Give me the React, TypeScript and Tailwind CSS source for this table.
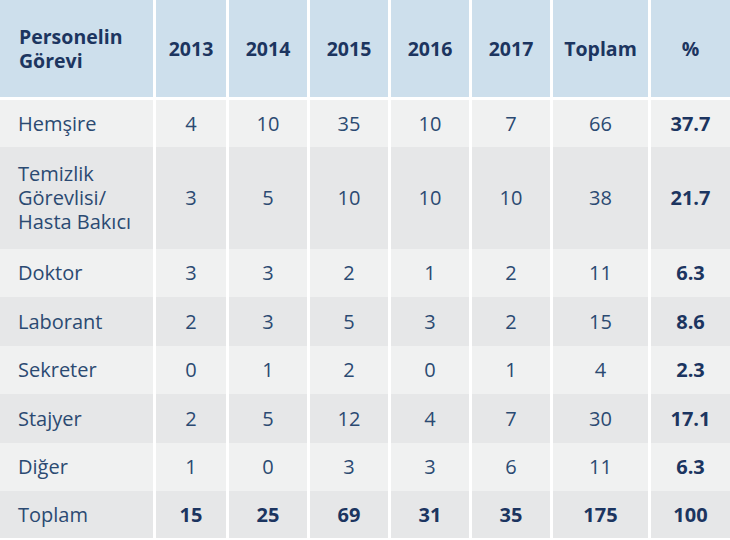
const rows: { name: string; vals: string[]; pct: string; h: string; dark?: boolean; bold?: boolean }[] = [
  { name: "Hemşire", vals: ["4", "10", "35", "10", "7", "66"], pct: "37.7", h: "h-[47px]" },
  { name: "Temizlik Görevlisi/ Hasta Bakıcı", vals: ["3", "5", "10", "10", "10", "38"], pct: "21.7", h: "h-[102px]", dark: true },
  { name: "Doktor", vals: ["3", "3", "2", "1", "2", "11"], pct: "6.3", h: "h-[48px]" },
  { name: "Laborant", vals: ["2", "3", "5", "3", "2", "15"], pct: "8.6", h: "h-[49px]", dark: true },
  { name: "Sekreter", vals: ["0", "1", "2", "0", "1", "4"], pct: "2.3", h: "h-[48px]" },
  { name: "Stajyer", vals: ["2", "5", "12", "4", "7", "30"], pct: "17.1", h: "h-[49px]", dark: true },
  { name: "Diğer", vals: ["1", "0", "3", "3", "6", "11"], pct: "6.3", h: "h-[48px]" },
  { name: "Toplam", vals: ["15", "25", "69", "31", "35", "175"], pct: "100", h: "h-[47px]", dark: true, bold: true },
];

const cols = "grid grid-cols-[153px_70px_78px_78px_78px_78px_95px_79px] gap-x-[3px]";
const headers = ["2013", "2014", "2015", "2016", "2017", "Toplam", "%"];

export default function App() {
  return (
    <div className="w-[730px] h-[540px] bg-white text-[20px] font-['Open_Sans',sans-serif]">
      <div className={`${cols} h-[97px] mb-[3px] text-[19.5px]`}>
        <div className="bg-[#cddfec] flex items-center pl-[19px] font-bold leading-[24px] text-[#1c3560]">
          Personelin
          <br />
          Görevi
        </div>
        {headers.map((h) => (
          <div key={h} className="bg-[#cddfec] flex items-center justify-center font-bold text-[#1c3560]">
            {h}
          </div>
        ))}
      </div>
      {rows.map((r) => {
        const bg = r.dark ? "bg-[#e6e7e8]" : "bg-[#f0f1f1]";
        return (
          <div key={r.name} className={`${cols} ${r.h}`}>
            <div className={`${bg} flex items-center pl-[18px] pr-2 leading-[24px] text-[#2b4a72]`}>
              {r.name}
            </div>
            {r.vals.map((v, i) => (
              <div
                key={i}
                className={`${bg} flex items-center justify-center ${r.bold ? "font-bold text-[#1c3560]" : "text-[#2b4a72]"}`}
              >
                {v}
              </div>
            ))}
            <div className={`${bg} flex items-center justify-center font-bold text-[#1c3560]`}>{r.pct}</div>
          </div>
        );
      })}
    </div>
  );
}
